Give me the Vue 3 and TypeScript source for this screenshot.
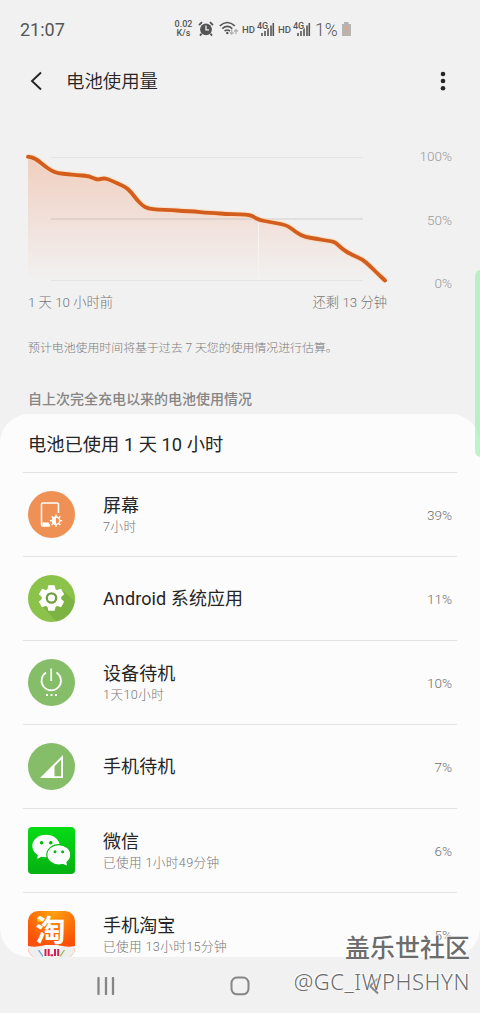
<!--
App.vue
Battery usage screen: remaining charge chart and per-app consumption list.
-->

<script setup lang="ts">
import { computed } from 'vue'

type IconName = 'screen' | 'gear' | 'power' | 'signal' | 'wechat' | 'taobao'

interface UsageItem {
  icon: IconName
  name: string
  detail?: string
  percent: number
}

const items: UsageItem[] = [
  { icon: 'screen', name: '屏幕', detail: '7小时', percent: 39 },
  { icon: 'gear', name: 'Android 系统应用', percent: 11 },
  { icon: 'power', name: '设备待机', detail: '1天10小时', percent: 10 },
  { icon: 'signal', name: '手机待机', percent: 7 },
  { icon: 'wechat', name: '微信', detail: '已使用 1小时49分钟', percent: 6 },
  { icon: 'taobao', name: '手机淘宝', detail: '已使用 13小时15分钟', percent: 5 }
]

const points: [number, number][] = [
  [4, 6.7], [9, 7.5], [14, 10.5], [20, 15.5], [27, 20.5], [34, 23.3], [44, 24.2], [52, 25],
  [64, 26], [69, 28], [74, 29.8], [80, 28], [86, 30], [93, 33.3], [101, 36.5], [107, 42],
  [113, 50], [119, 56], [124, 58.5], [134, 59.8], [148, 60], [158, 61], [171, 61.5],
  [181, 62.7], [191, 63], [201, 64], [216, 64.3], [226, 65], [230, 67], [235, 70],
  [246, 72], [262, 75], [268, 79], [274, 83.5], [281, 87], [294, 89], [304, 91],
  [311, 91.7], [318, 99], [328, 105], [338, 109], [346, 116], [354, 124], [361, 130.5]
]

// round the corners by running quadratic segments through the midpoints
const linePath = computed(() => {
  let d = `M${points[0].join(' ')}`
  for (let i = 1; i < points.length - 1; i++) {
    const [x, y] = points[i]
    const [nx, ny] = points[i + 1]
    d += `Q${x} ${y} ${(x + nx) / 2} ${(y + ny) / 2}`
  }
  return d + `L${points[points.length - 1].join(' ')}`
})
const areaPath = computed(() => `${linePath.value}H4Z`)
</script>

<template>
  <div class="screen">
    <div class="statusbar">
      <span class="clock">21:07</span>
      <div class="status-icons">
        <div class="speed"><span>0.02</span><span>K/s</span></div>
        <svg class="alarm" width="16" height="16" viewBox="0 0 16 16">
          <circle cx="8" cy="8.3" r="5.9" fill="#555" />
          <path d="M1 4.2L4 1.2M15 4.2L12 1.2M3.6 12.6L2 14.6M12.4 12.6L14 14.6" stroke="#555" stroke-width="1.8" />
          <path d="M8 4.5V8.8H11" fill="none" stroke="#f1f1f1" stroke-width="1.3" />
        </svg>
        <svg class="wifi" width="20" height="16" viewBox="0 0 20 16">
          <g fill="none" stroke="#555" stroke-width="1.6">
            <path d="M.8 4.8Q8.3-1.8 15.8 4.8" />
            <path d="M3.3 7.6Q8.3 3.2 13.3 7.6" />
            <path d="M5.6 10.2Q8.3 7.8 11 10.2" />
          </g>
          <circle cx="8.3" cy="12" r="1.2" fill="#555" />
          <path d="M12.7 8.3V13M10.9 11.3L12.7 13.2 14.5 11.3M17 13.2V8.8M15.2 10.5L17 8.6 18.8 10.5" fill="none" stroke="#aaa" stroke-width="1.1" />
        </svg>
        <template v-for="sim in 2" :key="sim">
          <span class="hd">HD</span>
          <svg class="bars" width="18" height="16" viewBox="0 0 18 16">
            <path d="M5 15v-3M8 15V10M11 15V7M14 15V4.5M16.3 15V2" stroke="#555" stroke-width="1.6" />
            <text x="0" y="8.3">4G</text>
          </svg>
        </template>
        <span class="level">1%</span>
        <svg width="9" height="14" viewBox="0 0 9 14">
          <path d="M0 2h2V0h4.5v2H9v12H0z" fill="#b8b4b2" />
          <path d="M4.5 4v5M4.5 10.5v1" stroke="#e2a084" stroke-width="1.2" />
        </svg>
      </div>
    </div>

    <header class="appbar">
      <svg class="back" width="14" height="20" viewBox="0 0 14 20">
        <path d="M12 1.5L3 10L12 18.5" fill="none" stroke="#252525" stroke-width="1.9" />
      </svg>
      <h1>电池使用量</h1>
      <svg class="more" width="6" height="20" viewBox="0 0 6 20">
        <g fill="#252525">
          <circle cx="3" cy="3" r="2.3" />
          <circle cx="3" cy="10" r="2.3" />
          <circle cx="3" cy="17.2" r="2.3" />
        </g>
      </svg>
    </header>

    <section class="chart">
      <div class="plot">
        <svg width="370" height="136" viewBox="0 0 370 136">
          <defs>
            <linearGradient id="fade" x1="0" y1="6" x2="0" y2="130" gradientUnits="userSpaceOnUse">
              <stop offset="0" stop-color="#f08050" stop-opacity=".31" />
              <stop offset="1" stop-color="#f08050" stop-opacity="0" />
            </linearGradient>
          </defs>
          <path :d="areaPath" fill="url(#fade)" />
          <path d="M27 7.5H339M27 130.5H339" stroke="#000" stroke-opacity=".05" />
          <path d="M27 69H339" stroke="#000" stroke-opacity=".065" stroke-width="2" />
          <path d="M234.5 70V130" stroke="#f6f2f0" />
          <path :d="linePath" class="halo" />
          <path :d="linePath" class="line" />
        </svg>
        <div class="scale"><span>100%</span><span>50%</span><span>0%</span></div>
      </div>
      <div class="range"><span>1 天 10 小时前</span><span>还剩 13 分钟</span></div>
    </section>

    <p class="note">预计电池使用时间将基于过去 7 天您的使用情况进行估算。</p>
    <h2 class="section-title">自上次完全充电以来的电池使用情况</h2>

    <main class="panel">
      <div class="panel-head">电池已使用 1 天 10 小时</div>
      <div v-for="item in items" :key="item.name" class="row">
        <svg class="icon" width="47" height="47" viewBox="0 0 47 47">
          <g v-if="item.icon === 'screen'">
            <circle cx="23.5" cy="23.5" r="23.5" fill="#ef9155" />
            <path d="M30.5 22V13.5Q30.5 12 29 12H15Q13.5 12 13.5 13.5V33.5Q13.5 35 15 35H22" fill="none" stroke="#fff" stroke-width="1.5" />
            <path d="M14 31.5H20.5L22.5 35H15Z" fill="#fff" />
            <g stroke="#fff" stroke-width="1.4">
              <path v-for="n in 8" :key="n" d="M28 23.5V26" :transform="`rotate(${n * 45} 28 29.7)`" />
            </g>
            <circle cx="28" cy="29.7" r="3.7" fill="none" stroke="#fff" stroke-width="1.3" />
            <path d="M28 26A3.7 3.7 0 0 0 28 33.4Z" fill="#fff" />
          </g>
          <g v-else-if="item.icon === 'gear'">
            <circle cx="23.5" cy="23.5" r="23.5" fill="#8bc34a" />
            <path d="M13 30L28.5 46.5A23.5 23.5 0 0 0 46.8 26L34 15Z" fill="#74a93e" opacity=".6" />
            <g fill="#fff">
              <circle cx="23.5" cy="23" r="9.8" />
              <path v-for="n in 6" :key="n" d="M20.3 10.2H26.7L28 17H19Z" :transform="`rotate(${n * 60} 23.5 23)`" />
            </g>
            <circle cx="23.5" cy="23" r="4.7" fill="#fff" stroke="#71a042" stroke-width="2.3" />
          </g>
          <g v-else-if="item.icon === 'power'">
            <circle cx="23.5" cy="23.5" r="23.5" fill="#86bd69" />
            <path d="M18 13.5A9.7 9.7 0 1 0 28.5 13.5M23.2 9.5V22" fill="none" stroke="#fff" stroke-width="1.7" />
            <path d="M18 36H20M22.5 36H24.5M27 36H29" stroke="#fff" stroke-width="1.8" />
          </g>
          <g v-else-if="item.icon === 'signal'">
            <circle cx="23.5" cy="23.5" r="23.5" fill="#86bd69" />
            <path fill-rule="evenodd" d="M12 35L35 12V35ZM26.5 23.2V33.2H33.2V16.5Z" fill="#fff" />
          </g>
          <g v-else-if="item.icon === 'wechat'">
            <defs>
              <linearGradient id="wx" x2="0" y2="1"><stop stop-color="#05dc14" /><stop offset="1" stop-color="#05b013" /></linearGradient>
            </defs>
            <rect width="47" height="47" rx="4" fill="url(#wx)" />
            <ellipse cx="18" cy="19" rx="13.7" ry="11.2" fill="#fff" />
            <path d="M10 27L9.2 32L15.5 28.8Z" fill="#fff" />
            <circle cx="13.6" cy="15.7" r="1.8" fill="#08b514" />
            <circle cx="22.8" cy="15.7" r="1.8" fill="#08b514" />
            <ellipse cx="30.8" cy="27.8" rx="12" ry="10.2" fill="#fff" stroke="#07bf14" stroke-width="1.2" />
            <path d="M34 36.5L39 38.4L38.2 34Z" fill="#fff" />
            <circle cx="27" cy="24.8" r="1.5" fill="#08b514" />
            <circle cx="34.6" cy="24.8" r="1.5" fill="#08b514" />
          </g>
          <g v-else>
            <defs>
              <radialGradient id="tb" cx=".55" cy="0" r=".75"><stop stop-color="#ffa411" /><stop offset="1" stop-color="#fa5007" /></radialGradient>
              <clipPath id="tbclip"><rect width="47" height="47" rx="10" /></clipPath>
            </defs>
            <g clip-path="url(#tbclip)">
              <rect width="47" height="47" fill="url(#tb)" />
              <path d="M0 35Q8 36.5 15 34.5H32Q39 36.5 47 35V47H0Z" fill="#eee" />
              <path d="M14 36.5L17 34H30L33 36.5V47H14Z" fill="#f8f6f6" />
              <path d="M10.5 39L15 45.5" stroke="#45abd8" stroke-width="1.2" />
              <path d="M36.5 39L32 45.5" stroke="#85b73f" stroke-width="1.2" />
              <path d="M17.5 38V45M20.7 38V45M27 38V45M30.2 38V45M22.5 44.3H25" stroke="#d61f50" stroke-width="2" />
            </g>
            <circle cx="12" cy="8" r="3" fill="#ffce08" />
            <text class="tao" x="7.5" y="29.5">淘</text>
          </g>
        </svg>
        <div class="info">
          <div class="name">{{ item.name }}</div>
          <div v-if="item.detail" class="detail">{{ item.detail }}</div>
        </div>
        <span class="percent">{{ item.percent }}%</span>
      </div>
    </main>

    <nav class="navbar">
      <svg width="18" height="18" viewBox="0 0 18 18"><path d="M1.5 1V17M9 1V17M16 1V17" stroke="#858585" stroke-width="2.3" stroke-linecap="round" /></svg>
      <svg class="home" width="20" height="20" viewBox="0 0 20 20"><rect x="1.5" y="1.5" width="17" height="16.8" rx="5.5" fill="none" stroke="#858585" stroke-width="2" /></svg>
      <svg width="12" height="18" viewBox="0 0 12 18"><path d="M10 1.5L2 9L10 16.5" fill="none" stroke="#858585" stroke-width="2" /></svg>
    </nav>

    <div class="edge-handle" />
    <div class="watermark">
      <div class="wm-name">盖乐世社区</div>
      <div class="wm-user">@GC_IWPHSHYN</div>
    </div>
  </div>
</template>

<style>
body {
  background: #f1f1f1;
}
</style>

<style scoped>
.screen {
  position: relative;
  width: 480px;
  height: 1013px;
  overflow: hidden;
  background: #f1f1f1;
  color: #252525;
  font-family: Roboto, 'Noto Sans CJK SC', sans-serif;
}

.statusbar {
  display: flex;
  justify-content: space-between;
  align-items: center;
  height: 58px;
  padding: 0 129px 0 20px;
  box-sizing: border-box;
  color: #555;
}

.clock {
  padding-top: 1px;
  font-size: 18px;
  line-height: 20px;
}

.status-icons {
  display: flex;
  align-items: center;
}

.speed {
  display: flex;
  flex-direction: column;
  align-items: center;
  width: 19px;
  margin-right: 5px;
  font-size: 9px;
  line-height: 9px;
  font-weight: 500;
}

.alarm {
  margin-right: 5px;
}

.wifi {
  margin-right: 3px;
}

.hd {
  width: 13px;
  margin-right: 2px;
  font-size: 9.5px;
  font-weight: 500;
}

.bars {
  margin-right: 3px;
}

.bars text {
  font-size: 9px;
  font-weight: 500;
  fill: #555;
  stroke: #f1f1f1;
  stroke-width: 1.5px;
  paint-order: stroke;
}

.level {
  width: 23px;
  margin: 0 4px 0 1px;
  padding-top: 2px;
  font-size: 17.5px;
  font-weight: 300;
}

.appbar {
  display: flex;
  align-items: center;
  height: 46px;
  padding: 0 34px 0 29px;
}

.appbar h1 {
  flex: 1;
  margin: 0 0 0 23px;
  padding-top: 2px;
  font-size: 18.4px;
  font-weight: 350;
  line-height: 26px;
}

.chart {
  padding: 46px 28px 0 24px;
}

.plot {
  display: flex;
  justify-content: space-between;
}

.line {
  fill: none;
  stroke: #d25d1d;
  stroke-width: 3.8px;
  stroke-linejoin: round;
  stroke-linecap: round;
}

.halo {
  fill: none;
  stroke: #ffd9b5;
  stroke-opacity: 0.6;
  stroke-width: 6px;
  stroke-linejoin: round;
}

.scale {
  display: flex;
  flex-direction: column;
  justify-content: space-between;
  height: 143px;
  margin: -2px 0 -5px;
  text-align: right;
  color: #999;
  font-size: 13.5px;
  font-weight: 300;
  line-height: 16px;
}

.range {
  display: flex;
  justify-content: space-between;
  width: 359px;
  margin: 7px 0 0 4px;
  color: #757575;
  font-size: 13.3px;
  font-weight: 300;
  line-height: 20px;
}

.note {
  margin: 25px 28px 0;
  color: #7c7c7c;
  font-size: 11.9px;
  font-weight: 300;
  line-height: 20px;
}

.section-title {
  margin: 31px 28px 0;
  color: #858585;
  font-size: 14px;
  font-weight: 500;
  line-height: 20px;
}

.panel {
  height: 543px;
  margin-top: 5px;
  padding: 0 23px;
  box-sizing: border-box;
  overflow: hidden;
  border-radius: 29px;
  background: #fcfcfc;
}

.panel-head {
  height: 58px;
  padding-left: 5px;
  font-size: 18.3px;
  line-height: 61px;
}

.row {
  display: flex;
  align-items: center;
  height: 84px;
  padding: 0 5px;
  box-sizing: border-box;
  border-top: 1px solid #e3e3e3;
}

.icon {
  flex: none;
}

.info {
  flex: 1;
  margin-left: 28px;
  padding-top: 1px;
}

.name {
  font-size: 18px;
  letter-spacing: 0.1px;
  line-height: 24px;
}

.detail {
  color: #757575;
  font-size: 12.6px;
  font-weight: 300;
  letter-spacing: 0.4px;
  line-height: 18px;
}

.percent {
  color: #6e6e6e;
  font-size: 13.5px;
  font-weight: 300;
}

.tao {
  fill: #fff;
  font-family: 'Noto Sans CJK SC', sans-serif;
  font-size: 30px;
  font-weight: 700;
}

.navbar {
  display: flex;
  justify-content: space-between;
  align-items: center;
  height: 58px;
  padding: 0 100px 0 97px;
}

.home {
  margin-right: 4px;
}

.edge-handle {
  position: absolute;
  top: 270px;
  right: -8px;
  width: 13px;
  height: 187px;
  border-radius: 6px;
  background: rgba(158, 239, 166, 0.65);
}

.watermark {
  position: absolute;
  top: 932px;
  right: 10px;
  text-align: right;
  color: #6c6c6c;
  text-shadow: -1px -1px 1px #fff, 1px -1px 1px #fff;
  white-space: nowrap;
}

.wm-name {
  font-size: 25px;
  font-weight: 500;
  line-height: 34px;
}

.wm-user {
  font-family: 'Noto Sans', sans-serif;
  font-size: 22px;
  font-weight: 350;
  letter-spacing: 0.55px;
  line-height: 30px;
}
</style>
